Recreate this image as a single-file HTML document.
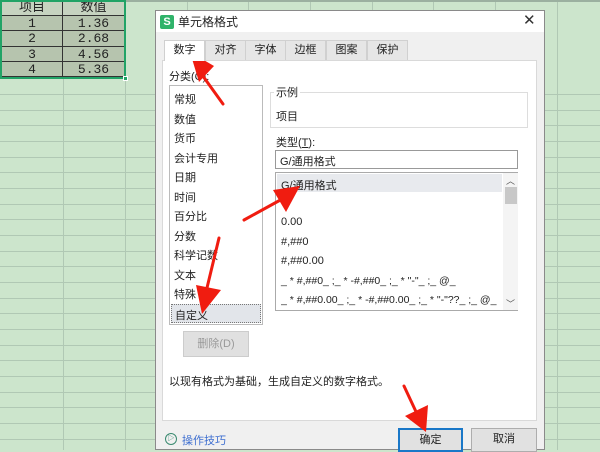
<!DOCTYPE html>
<html><head><meta charset="utf-8"><style>
*{margin:0;padding:0;box-sizing:border-box}
body{width:600px;height:450px;overflow:hidden;position:relative;background:#cce5cc;font-family:"Liberation Sans","Noto Sans CJK SC",sans-serif;font-size:11px;color:#222}
.a{position:absolute}
.vl{position:absolute;top:0;width:1px;height:450px;background:#b0c8b4}
.hl{position:absolute;left:0;width:600px;height:1px;background:#b0c8b4}
.cell{position:absolute;text-align:center;font-family:"Liberation Mono","Noto Sans CJK SC",monospace;font-size:13px;line-height:16px;border-right:1px solid #333;border-bottom:1px solid #333}
.tab{position:absolute;top:40px;height:20px;width:41px;background:#e6e6e6;border:1px solid #d0d0d0;border-bottom:none;text-align:center;line-height:19px}
.li{position:absolute;left:4px;font-size:11px}
.btn{position:absolute;border:1px solid #adadad;background:#e1e1e1;text-align:center;line-height:20px}
</style></head><body>
<div class="vl" style="left:63px"></div><div class="vl" style="left:125px"></div><div class="vl" style="left:187px"></div><div class="vl" style="left:248px"></div><div class="vl" style="left:310px"></div><div class="vl" style="left:372px"></div><div class="vl" style="left:433px"></div><div class="vl" style="left:495px"></div><div class="vl" style="left:557px"></div>
<div class="hl" style="top:94px"></div><div class="hl" style="top:110px"></div><div class="hl" style="top:125px"></div><div class="hl" style="top:141px"></div><div class="hl" style="top:157px"></div><div class="hl" style="top:172px"></div><div class="hl" style="top:188px"></div><div class="hl" style="top:204px"></div><div class="hl" style="top:219px"></div><div class="hl" style="top:235px"></div><div class="hl" style="top:251px"></div><div class="hl" style="top:266px"></div><div class="hl" style="top:282px"></div><div class="hl" style="top:298px"></div><div class="hl" style="top:313px"></div><div class="hl" style="top:329px"></div><div class="hl" style="top:345px"></div><div class="hl" style="top:360px"></div><div class="hl" style="top:376px"></div><div class="hl" style="top:392px"></div><div class="hl" style="top:407px"></div><div class="hl" style="top:423px"></div><div class="hl" style="top:439px"></div>
<div class="hl" style="top:0;height:2px;background:#9bb0a0"></div>
<div class="cell" style="left:2px;top:0;width:61px;height:16px;background:#c6d3c0">项目</div>
<div class="cell" style="left:63px;top:0;width:62px;height:16px;background:#c6d3c0">数值</div>
<div class="cell" style="left:2px;top:16px;width:61px;height:15px;background:#b6c4ae">1</div><div class="cell" style="left:63px;top:16px;width:62px;height:15px;background:#b6c4ae">1.36</div>
<div class="cell" style="left:2px;top:31px;width:61px;height:16px;background:#b6c4ae">2</div><div class="cell" style="left:63px;top:31px;width:62px;height:16px;background:#b6c4ae">2.68</div>
<div class="cell" style="left:2px;top:47px;width:61px;height:15px;background:#b6c4ae">3</div><div class="cell" style="left:63px;top:47px;width:62px;height:15px;background:#b6c4ae">4.56</div>
<div class="cell" style="left:2px;top:62px;width:61px;height:15px;background:#b6c4ae">4</div><div class="cell" style="left:63px;top:62px;width:62px;height:15px;background:#b6c4ae">5.36</div>
<div class="a" style="left:0;top:0;width:126px;height:79px;border:2px solid #21a366"></div>
<div class="a" style="left:123px;top:76px;width:5px;height:5px;background:#21a366;border:1px solid #fff"></div>
<div class="a" style="left:155px;top:10px;width:390px;height:440px;background:#f0f0f0;border:1px solid #8a8a8a"></div>
<div class="a" style="left:156px;top:11px;width:388px;height:21px;background:#fff"></div>
<div class="a" style="left:160px;top:15px;width:14px;height:14px;background:#2fb36a;color:#fff;font-weight:bold;font-size:11px;line-height:14px;text-align:center;border-radius:2px">S</div>
<div class="a" style="left:178px;top:13px;font-size:12px">单元格格式</div>
<div class="a" style="left:523px;top:11px;font-size:15px;color:#333">✕</div>
<div class="tab" style="left:164px;background:#fff;height:21px;z-index:2">数字</div>
<div class="tab" style="left:205px">对齐</div><div class="tab" style="left:245px">字体</div><div class="tab" style="left:285px">边框</div><div class="tab" style="left:326px">图案</div><div class="tab" style="left:367px">保护</div>
<div class="a" style="left:162px;top:60px;width:375px;height:361px;background:#fff;border:1px solid #d9d9d9"></div>
<div class="a" style="left:169px;top:68px">分类(C):</div>
<div class="a" style="left:169px;top:85px;width:94px;height:240px;border:1px solid #bbb;background:#fff">
<div class="li" style="top:5px">常规</div><div class="li" style="top:25px">数值</div><div class="li" style="top:44px">货币</div><div class="li" style="top:64px">会计专用</div><div class="li" style="top:83px">日期</div><div class="li" style="top:103px">时间</div><div class="li" style="top:122px">百分比</div><div class="li" style="top:142px">分数</div><div class="li" style="top:161px">科学记数</div><div class="li" style="top:181px">文本</div><div class="li" style="top:200px">特殊</div>
<div class="a" style="left:1px;top:218px;width:90px;height:19px;background:#e2e5ea;border:1px dotted #777"><span style="position:absolute;left:3px;top:2px">自定义</span></div>
</div>
<div class="a" style="left:270px;top:92px;width:258px;height:36px;border:1px solid #ddd"></div>
<div class="a" style="left:274px;top:84px;background:#fff;padding:0 2px">示例</div>
<div class="a" style="left:276px;top:108px">项目</div>
<div class="a" style="left:276px;top:134px">类型(<u>T</u>):</div>
<div class="a" style="left:275px;top:150px;width:243px;height:19px;border:1px solid #999;padding:2px 4px">G/通用格式</div>
<div class="a" style="left:275px;top:172px;width:243px;height:139px;border:1px solid #aaa;background:#fff">
<div class="a" style="left:1px;top:1px;width:225px;height:18px;background:#e8eaee"></div>
<div class="a" style="left:5px;top:4px">G/通用格式</div>
<div class="a" style="left:5px;top:24px">0</div>
<div class="a" style="left:5px;top:43px">0.00</div>
<div class="a" style="left:5px;top:63px">#,##0</div>
<div class="a" style="left:5px;top:82px">#,##0.00</div>
<div class="a" style="left:5px;top:102px;white-space:nowrap;font-size:10.5px">_ * #,##0_ ;_ * -#,##0_ ;_ * "-"_ ;_ @_</div>
<div class="a" style="left:5px;top:121px;white-space:nowrap;font-size:10.5px;width:220px;overflow:hidden">_ * #,##0.00_ ;_ * -#,##0.00_ ;_ * "-"??_ ;_ @_</div>
<div class="a" style="left:227px;top:0;width:15px;height:137px;background:#f4f4f4"></div>
<div class="a" style="left:230px;top:1px;font-size:9px;color:#555">︿</div>
<div class="a" style="left:229px;top:14px;width:12px;height:17px;background:#c8c8c8"></div>
<div class="a" style="left:230px;top:124px;font-size:9px;color:#555">﹀</div>
</div>
<div class="btn" style="left:183px;top:331px;width:66px;height:26px;line-height:24px;color:#999;background:#e0e0e0;border-color:#ccc">删除(D)</div>
<div class="a" style="left:169px;top:373px">以现有格式为基础，生成自定义的数字格式。</div>
<div class="a" style="left:165px;top:433px;width:12px;height:12px;border:1px solid #3a8a70;border-radius:50%;font-size:7px;color:#3a8a70;text-align:center;line-height:10px">▷</div>
<div class="a" style="left:182px;top:432px;color:#3d6ed0">操作技巧</div>
<div class="btn" style="left:398px;top:428px;width:65px;height:24px;border:2px solid #1a78c8">确定</div>
<div class="btn" style="left:471px;top:428px;width:66px;height:24px">取消</div>
<svg class="a" style="left:0;top:0" width="600" height="450">
<g fill="#f01c10" stroke="#f01c10" stroke-width="3" stroke-linecap="round">
<line x1="223" y1="104" x2="200" y2="72"/><polygon stroke="none" points="190,52 214,66 199,82"/>
<line x1="244" y1="220" x2="284" y2="198"/><polygon stroke="none" points="300,186 273,190 286,212"/>
<line x1="219" y1="238" x2="206" y2="292"/><polygon stroke="none" points="202,314 196,285 221,290"/>
<line x1="404" y1="386" x2="418" y2="416"/><polygon stroke="none" points="426,432 405,416 428,405"/>
</g></svg>
</body></html>
